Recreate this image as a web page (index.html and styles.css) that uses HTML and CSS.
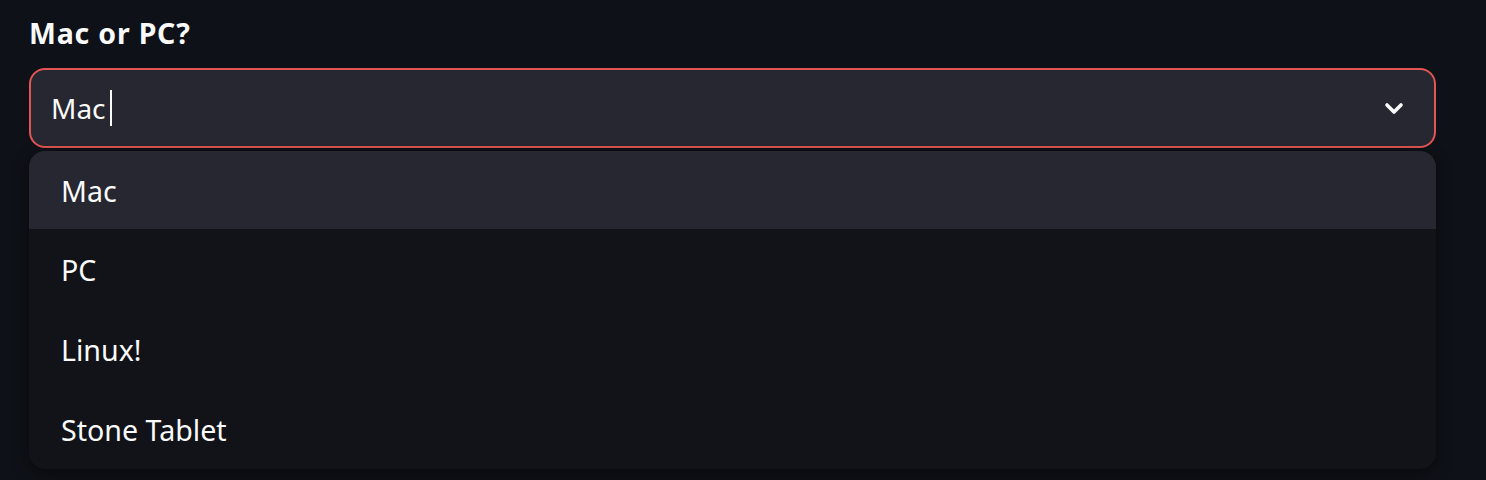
FILE: index.html
```html
<!DOCTYPE html>
<html>
<head>
<meta charset="utf-8">
<link rel="stylesheet" href="styles.css">
</head>
<body>
<div class="page">
  <label class="label">Mac or PC?</label>
  <div class="select">
    <div class="value">Mac<span class="caret"></span></div>
    <svg class="chevron" width="24" height="24" viewBox="0 0 24 24"><path d="M5 9l7 7 7-7" fill="none" stroke="#fafafa" stroke-width="3.6" stroke-linecap="round" stroke-linejoin="round"/></svg>
  </div>
  <ul class="menu">
    <li class="option active">Mac</li>
    <li class="option">PC</li>
    <li class="option">Linux!</li>
    <li class="option">Stone Tablet</li>
  </ul>
</div>
</body>
</html>
```
FILE: styles.css
```css
html, body {
  margin: 0;
  padding: 0;
  background: #0e1117;
  height: 100%;
}
body {
  font-family: "Noto Sans", "Open Sans", sans-serif;
  color: #fafafa;
}
.page {
  padding: 13px 50px 0 29px;
  display: flex;
  flex-direction: column;
}
.label {
  font-size: 28.5px;
  font-weight: 700;
  line-height: 40px;
  margin-bottom: 15px;
  display: block;
  letter-spacing: 0.8px;
}
.select {
  box-sizing: border-box;
  height: 80px;
  border: 2px solid #e35552;
  border-radius: 16px;
  background: #262730;
  display: flex;
  align-items: center;
  justify-content: space-between;
  padding: 0 28px 0 20px;
}
.value {
  font-size: 28px;
  display: flex;
  align-items: center;
}
.caret {
  display: inline-block;
  width: 2px;
  height: 36px;
  background: #fafafa;
  margin-left: 4px;
}
.chevron {
  display: block;
}
.menu {
  list-style: none;
  margin: 3px 0 0;
  padding: 0;
  background: #111318;
  border-radius: 16px;
  overflow: hidden;
  box-shadow: 0 4px 16px rgba(0,0,0,0.45);
}
.option {
  height: 80px;
  display: flex;
  align-items: center;
  padding-left: 32px;
  font-size: 28.6px;
}
.option.active {
  background: #262730;
  height: 78px;
}
```
